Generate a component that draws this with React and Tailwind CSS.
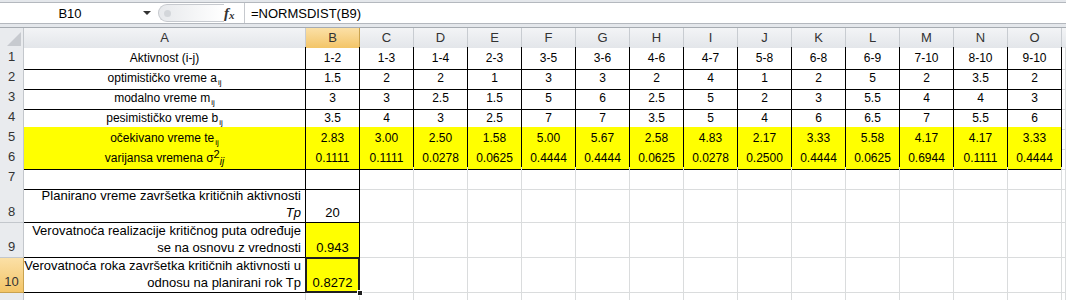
import React from "react";
import clsx from "clsx";

const letters = ["A", "B", "C", "D", "E", "F", "G", "H", "I", "J", "K", "L", "M", "N", "O"];

const activities = ["1-2", "1-3", "1-4", "2-3", "3-5", "3-6", "4-6", "4-7", "5-8", "6-8", "6-9", "7-10", "8-10", "9-10"];
const optimistic = ["1.5", "2", "2", "1", "3", "3", "2", "4", "1", "2", "5", "2", "3.5", "2"];
const modal = ["3", "3", "2.5", "1.5", "5", "6", "2.5", "5", "2", "3", "5.5", "4", "4", "3"];
const pessimistic = ["3.5", "4", "3", "2.5", "7", "7", "3.5", "5", "4", "6", "6.5", "7", "5.5", "6"];
const expected = ["2.83", "3.00", "2.50", "1.58", "5.00", "5.67", "2.58", "4.83", "2.17", "3.33", "5.58", "4.17", "4.17", "3.33"];
const variance = ["0.1111", "0.1111", "0.0278", "0.0625", "0.4444", "0.4444", "0.0625", "0.0278", "0.2500", "0.4444", "0.0625", "0.6944", "0.1111", "0.4444"];

const gridCols = "grid grid-cols-[24px_282px_repeat(14,54px)_4px]";

function Ij() {
  return <span className="text-[8px] relative top-[3px] ml-[1px]">ij</span>;
}

function RowHead({ n, selected }) {
  return (
    <div
      className={clsx(
        "border-r border-b flex items-end justify-center pb-[2px] text-[13px] text-[#333]",
        selected
          ? "bg-gradient-to-b from-[#fbe0a6] to-[#f3c567] border-[#c9a24f]"
          : "bg-[#e9ebee] border-[#c3c7cc]"
      )}
    >
      {n}
    </div>
  );
}

function Cell({ children, className, dark }) {
  return (
    <div
      className={clsx(
        "border-r border-b flex items-center justify-center whitespace-nowrap overflow-hidden",
        dark ? "border-black" : "border-[#dadcdd]",
        className
      )}
    >
      {children}
    </div>
  );
}

function TableRow({ n, label, values, yellow }) {
  return (
    <div className={clsx(gridCols, "h-[20px] text-[12px]")}>
      <RowHead n={n} />
      <Cell dark className={clsx("pt-[1px]", yellow && "bg-[#ffff00]")}>
        {label}
      </Cell>
      {values.map((v, i) => (
        <Cell key={i} dark className={clsx("pt-[1px]", yellow && "bg-[#ffff00]")}>
          {v}
        </Cell>
      ))}
      <Cell />
    </div>
  );
}

function EmptyCells({ from }) {
  return letters.slice(from).map((l) => <Cell key={l} />);
}

export default function App() {
  return (
    <div className="w-[1066px] h-[300px] overflow-hidden bg-white text-black font-['Liberation_Sans',Arial,sans-serif]">
      {/* formula bar */}
      <div className="h-[3px] bg-[#e4e7eb] border-b border-[#b4b8be]" />
      <div className="h-[21px] flex items-center border-b border-[#b4b8be] text-[13px]">
        <div className="w-[140px] text-center pt-[1px]">B10</div>
        <div className="w-[18px] flex items-center justify-start pl-[3px]">
          <span className="block w-0 h-0 border-l-[4px] border-r-[4px] border-t-[4px] border-l-transparent border-r-transparent border-t-[#333]" />
        </div>
        <div className="w-[66px] h-[18px] rounded-l-full border border-r-0 border-[#c6c9ce] bg-gradient-to-r from-[#e7e9ec] to-white flex items-center">
          <span className="ml-[5px] w-[7px] h-[7px] rounded-full bg-[#d3d6da]" />
        </div>
        <div className="w-[20px] font-['Liberation_Serif',serif] italic font-bold text-[15px] text-[#333] flex items-end leading-none">
          f<span className="text-[11px]">x</span>
        </div>
        <div className="flex-1 h-full border-l border-[#c6c9ce] pl-[6px] flex items-center pt-[1px]">=NORMSDIST(B9)</div>
      </div>
      <div className="h-[3px] bg-[#e4e7eb]" />

      {/* column header */}
      <div className={clsx(gridCols, "h-[20px] border-t border-b border-[#a6abb1] text-[13px] text-[#333]")}>
        <div className="bg-[#e9ebee] border-r border-[#c3c7cc] flex items-end justify-end p-[2px]">
          <svg width="14" height="14" viewBox="0 0 14 14">
            <polygon points="14,0 14,14 0,14" fill="#c7cacf" />
          </svg>
        </div>
        {letters.map((l) => (
          <div
            key={l}
            className={clsx(
              "border-r flex items-center justify-center",
              l === "B"
                ? "bg-gradient-to-b from-[#fbe0a6] to-[#f3c567] border-[#c9a24f]"
                : "bg-gradient-to-b from-[#f3f4f6] to-[#e3e6ea] border-[#c8ccd1]"
            )}
          >
            {l}
          </div>
        ))}
        <div className="bg-gradient-to-b from-[#f3f4f6] to-[#e3e6ea]" />
      </div>

      <TableRow n={1} label="Aktivnost (i-j)" values={activities} />
      <TableRow
        n={2}
        label={
          <span>
            optimističko vreme a<Ij />
          </span>
        }
        values={optimistic}
      />
      <TableRow
        n={3}
        label={
          <span>
            modalno vreme m<Ij />
          </span>
        }
        values={modal}
      />
      <TableRow
        n={4}
        label={
          <span>
            pesimističko vreme b<Ij />
          </span>
        }
        values={pessimistic}
      />
      <TableRow
        n={5}
        label={
          <span>
            očekivano vreme te<Ij />
          </span>
        }
        values={expected}
        yellow
      />
      <TableRow
        n={6}
        label={
          <span>
            varijansa vremena σ<span className="relative -top-[4px] text-[11px]">2</span>
            <span className="italic text-[10px] relative top-[3px]">ij</span>
          </span>
        }
        values={variance}
        yellow
      />

      {/* row 7 */}
      <div className={clsx(gridCols, "h-[21px]")}>
        <RowHead n={7} />
        <Cell dark />
        <Cell dark />
        <EmptyCells from={2} />
        <Cell />
      </div>

      {/* row 8 */}
      <div className={clsx(gridCols, "h-[35px] text-[13px] leading-[17px]")}>
        <RowHead n={8} />
        <Cell dark className="!items-end !justify-end text-right pr-[4px] pb-[1px]">
          <div>
            Planirano vreme završetka kritičnih aktivnosti
            <br />
            <span className="italic">Tp</span>
          </div>
        </Cell>
        <Cell dark className="!items-end pb-[1px]">20</Cell>
        <EmptyCells from={2} />
        <Cell />
      </div>

      {/* row 9 */}
      <div className={clsx(gridCols, "h-[35px] text-[13px] leading-[17px]")}>
        <RowHead n={9} />
        <Cell dark className="!items-end !justify-end text-right pr-[4px] pb-[1px]">
          <div>
            Verovatnoća realizacije kritičnog puta određuje
            <br />
            se na osnovu z vrednosti
          </div>
        </Cell>
        <Cell dark className="!items-end pb-[1px] bg-[#ffff00]">0.943</Cell>
        <EmptyCells from={2} />
        <Cell />
      </div>

      {/* row 10 */}
      <div className={clsx(gridCols, "h-[35px] text-[13px] leading-[17px]")}>
        <RowHead n={10} selected />
        <Cell dark className="!items-end !justify-end text-right pr-[4px] pb-[1px]">
          <div>
            Verovatnoća roka završetka kritičnih aktivnosti u
            <br />
            odnosu na planirani rok Tp
          </div>
        </Cell>
        <div className="relative border-r border-b border-black bg-[#ffff00] flex items-end justify-center pb-[1px]">
          0.8272
          <div className="absolute -left-[1px] -top-[1px] -right-[1px] -bottom-[1px] border-2 border-[#1f1f1f]" />
          <div className="absolute -right-[4px] -bottom-[4px] w-[6px] h-[6px] bg-[#1f1f1f] border border-white" />
        </div>
        <EmptyCells from={2} />
        <Cell />
      </div>

      {/* row 11, only its top edge is in view */}
      <div className={clsx(gridCols, "h-[20px]")}>
        <RowHead n="" />
        <EmptyCells from={0} />
        <Cell />
      </div>
    </div>
  );
}
